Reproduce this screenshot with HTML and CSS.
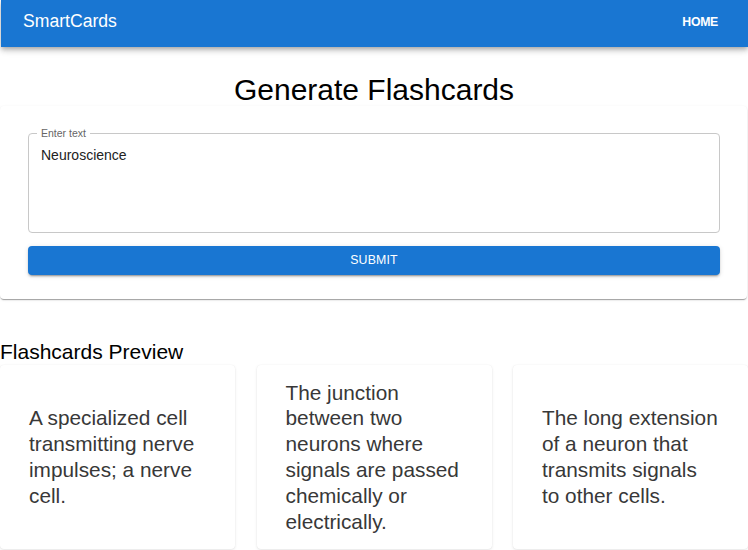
FILE: index.html
```html
<!DOCTYPE html>
<html lang="en">
<head>
<meta charset="utf-8">
<title>SmartCards</title>
<link rel="stylesheet" href="styles.css">
</head>
<body>
<header class="appbar">
  <div class="brand">SmartCards</div>
  <nav class="nav"><a class="nav-link" href="#">HOME</a></nav>
</header>
<main class="main">
  <h1 class="title">Generate Flashcards</h1>
  <section class="paper">
    <div class="field">
      <span class="field-label">Enter text</span>
      <div class="field-value">Neuroscience</div>
    </div>
    <button class="submit" type="button">SUBMIT</button>
  </section>
  <h2 class="preview-title">Flashcards Preview</h2>
  <div class="cards">
    <div class="card"><p class="card-text">A specialized cell transmitting nerve impulses; a nerve cell.</p></div>
    <div class="card"><p class="card-text">The junction between two neurons where signals are passed chemically or electrically.</p></div>
    <div class="card"><p class="card-text">The long extension of a neuron that transmits signals to other cells.</p></div>
  </div>
</main>
</body>
</html>
```
FILE: styles.css
```css
* { box-sizing: border-box; }
html, body { margin: 0; padding: 0; background: #fff; }
body {
  font-family: "Liberation Sans", Arial, sans-serif;
  color: #000;
  overflow: hidden;
  height: 550px;
}
.appbar {
  height: 47px;
  background: #1976d2;
  color: #fff;
  display: flex;
  align-items: center;
  justify-content: space-between;
  padding: 0 30px 0 22px;
  margin-left: 1px;
  box-shadow: 0 2px 4px -1px rgba(0,0,0,0.2), 0 4px 5px 0 rgba(0,0,0,0.14), 0 1px 10px 0 rgba(0,0,0,0.12);
  position: relative;
  z-index: 2;
}
.brand {
  font-size: 17.6px;
  line-height: 1;
  margin-top: -4px;
}
.nav-link {
  color: #fff;
  text-decoration: none;
  font-size: 12.3px;
  font-weight: 700;
  letter-spacing: -0.3px;
  margin-top: -4px;
  display: block;
}
.main { display: flex; flex-direction: column; }
.title {
  margin: 0;
  padding-top: 27px;
  font-size: 30px;
  font-weight: 400;
  line-height: 32px;
  text-align: center;
  color: #000;
}
.paper {
  margin-right: 1px;
  background: #fff;
  border-radius: 4px;
  box-shadow: 0 2px 1px -1px rgba(0,0,0,0.22), 0 1px 1px 0 rgba(0,0,0,0.14), 0 1px 3px 0 rgba(0,0,0,0.10);
  padding: 27px 27px 24px 28px;
  display: flex;
  flex-direction: column;
  gap: 13px;
}
.field {
  position: relative;
  height: 100px;
  border: 1px solid #c8c8c8;
  border-radius: 4px;
  padding: 13px 12px;
}
.field-label {
  position: absolute;
  top: -7px;
  left: 8px;
  padding: 0 4px;
  background: #fff;
  font-size: 10.5px;
  line-height: 12px;
  color: #666;
}
.field-value {
  font-size: 14px;
  line-height: 16px;
  color: #222;
}
.submit {
  height: 29px;
  border: 0;
  border-radius: 4px;
  background: #1976d2;
  color: #fff;
  font-family: "Liberation Sans", Arial, sans-serif;
  font-size: 12.3px;
  font-weight: 500;
  letter-spacing: 0.2px;
  box-shadow: 0 3px 1px -2px rgba(0,0,0,0.2), 0 2px 2px 0 rgba(0,0,0,0.14), 0 1px 5px 0 rgba(0,0,0,0.12);
  padding: 0 0 2px 0;
}
.preview-title {
  margin: 39px 0 0 0;
  font-size: 21px;
  font-weight: 400;
  line-height: 27px;
}
.cards {
  display: grid;
  grid-template-columns: repeat(3, 1fr);
  gap: 21.5px;
}
.card {
  height: 184px;
  background: #fff;
  border-radius: 4px;
  box-shadow: 0 1px 3px 0 rgba(0,0,0,0.10), 0 0 1px 0 rgba(0,0,0,0.08);
  display: flex;
  align-items: center;
  padding: 0 29px 0 29px;
}
.card-text {
  margin: 0;
  font-size: 20.8px;
  line-height: 25.8px;
  color: #383838;
}
```
